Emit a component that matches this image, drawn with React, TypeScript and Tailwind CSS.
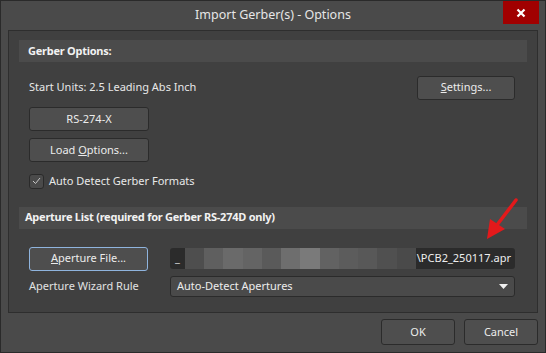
import React from "react";

const font = "font-['Segoe_UI','Noto_Sans','Open_Sans',sans-serif]";

const Btn = ({ children, className = "" }: { children: React.ReactNode; className?: string }) => (
    <button
        className={`h-[24px] rounded-[3px] border border-[#2b2b2b] bg-[#4e4e4e] text-[11px] text-[#ececec] flex items-center justify-center whitespace-nowrap ${className}`}
    >
        {children}
    </button>
);

const Band = ({ title, pad = "pl-[9px]" }: { title: string; pad?: string }) => (
    <div className={`h-[22px] bg-[#4b4b4b] flex items-center ${pad} text-[11px] font-bold tracking-[-0.25px] text-[#f2f2f2] whitespace-nowrap`}>
        {title}
    </div>
);

// pixelated censor blocks over the file path
const blur = ["#4e4e4e", "#5f5f5f", "#6a6a6a", "#646464", "#5a5a5a", "#6e6e6e", "#7a7a7a", "#626262", "#5c5c5c", "#585858", "#505050", "#4a4a4a"];

export default function App() {
    return (
        <div className={`w-[546px] h-[353px] bg-[#4a4a4a] border border-[#2a2a2a] flex flex-col ${font}`}>
            <div className="h-[29px] relative flex items-center justify-center">
                <span className="text-[12.5px] text-[#e6e6e6]">Import Gerber(s) - Options</span>
                <div className="absolute right-[6px] top-0 w-[36px] h-[23px] bg-[#a10000] flex items-center justify-center">
                    <svg width="10" height="10" viewBox="0 0 10 10">
                        <path d="M1.5 1.5 L8.5 8.5 M8.5 1.5 L1.5 8.5" stroke="#fff" strokeWidth="2.2" />
                    </svg>
                </div>
            </div>

            <div className="mx-[7px] h-[283px] bg-[#404040] border border-[#2e2e2e] px-[10px] pt-[9px] relative">
                <Band title="Gerber Options:" />
                <div className="pl-[10px] pr-[12px]">
                    <div className="mt-[14px] flex items-center justify-between h-[23px]">
                        <span className="text-[11px] text-[#e8e8e8]">Start Units: 2.5 Leading Abs Inch</span>
                        <Btn className="w-[98px] h-[23px]">
                            <span><span className="underline">S</span>ettings...</span>
                        </Btn>
                    </div>
                    <Btn className="mt-[8px] w-[120px] h-[23px]">RS-274-X</Btn>
                    <Btn className="mt-[7px] w-[120px]">
                        <span>Load <span className="underline">O</span>ptions...</span>
                    </Btn>
                    <div className="mt-[11px] flex items-center gap-[5px]">
                        <div className="w-[15px] h-[15px] rounded-[3px] border border-[#2a2a2a] bg-[#4a4a4a] flex items-center justify-center">
                            <svg width="9" height="8" viewBox="0 0 9 8">
                                <path d="M1 4 L3.5 6.5 L8 1" stroke="#c8c8c8" strokeWidth="1" fill="none" />
                            </svg>
                        </div>
                        <span className="text-[11px] text-[#e8e8e8]">Auto Detect Gerber Formats</span>
                    </div>
                </div>

                <div className="mt-[17px]">
                    <Band title="Aperture List (required for Gerber RS-274D only)" pad="pl-[6px]" />
                </div>
                <div className="pl-[10px] pr-[12px]">
                    <div className="mt-[18px] flex items-center gap-[22px]">
                        <Btn className="w-[119px] border-[#8fb4de]">
                            <span><span className="underline">A</span>perture File...</span>
                        </Btn>
                        <div className="flex-1 h-[21px] rounded-[3px] bg-[#2b2b2b] flex items-center pr-[4px] overflow-hidden">
                            <span className="text-[11px] text-[#ddd] ml-[5px] w-[10px]">_</span>
                            <div className="flex h-full flex-1">
                                {blur.map((c, i) => (
                                    <div key={i} className="flex-1 h-full" style={{ backgroundColor: c }} />
                                ))}
                            </div>
                            <span className="text-[11px] text-[#eeeeee] pl-[1px]">\PCB2_250117.apr</span>
                        </div>
                    </div>
                    <div className="mt-[5px] flex items-center gap-[22px]">
                        <span className="w-[119px] text-[11px] text-[#e2e2e2] whitespace-nowrap">Aperture Wizard Rule</span>
                        <div className="flex-1 h-[21px] rounded-[3px] border border-[#2b2b2b] bg-[#4a4a4a] flex items-center justify-between pl-[6px] pr-[6px]">
                            <span className="text-[11px] text-[#ececec]">Auto-Detect Apertures</span>
                            <svg width="9" height="5" viewBox="0 0 9 5">
                                <path d="M0 0 L9 0 L4.5 5 Z" fill="#f0f0f0" />
                            </svg>
                        </div>
                    </div>
                </div>

                <svg className="absolute left-[473px] top-[167px]" width="38" height="44" viewBox="0 0 38 44">
                    <path d="M34 2 L15 27" stroke="#e3191b" strokeWidth="3.5" strokeLinecap="round" />
                    <path d="M5 41 L8 21 L23 31 Z" fill="#e3191b" />
                </svg>
            </div>

            <div className="flex justify-end gap-[9px] pr-[7px] pt-[6px]">
                <Btn className="w-[74px] h-[26px]">OK</Btn>
                <Btn className="w-[74px] h-[26px]">Cancel</Btn>
            </div>
        </div>
    );
}
